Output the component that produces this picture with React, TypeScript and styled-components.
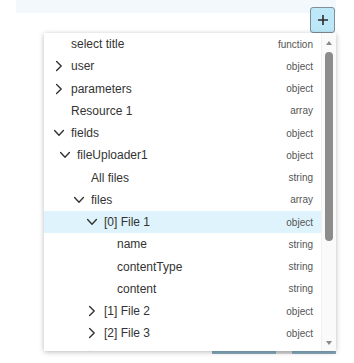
import React from "react";
import styled, {createGlobalStyle} from "styled-components";

type Node = {
    label: string
    type: string
    level: number
    expander?: "open" | "closed"
    selected?: boolean
}

const rows: Node[] = [
    {label: "select title", type: "function", level: 0},
    {label: "user", type: "object", level: 0, expander: "closed"},
    {label: "parameters", type: "object", level: 0, expander: "closed"},
    {label: "Resource 1", type: "array", level: 0},
    {label: "fields", type: "object", level: 0, expander: "open"},
    {label: "fileUploader1", type: "object", level: 1, expander: "open"},
    {label: "All files", type: "string", level: 2},
    {label: "files", type: "array", level: 2, expander: "open"},
    {label: "[0] File 1", type: "object", level: 3, expander: "open", selected: true},
    {label: "name", type: "string", level: 4},
    {label: "contentType", type: "string", level: 4},
    {label: "content", type: "string", level: 4},
    {label: "[1] File 2", type: "object", level: 3, expander: "closed"},
    {label: "[2] File 3", type: "object", level: 3, expander: "closed"},
    // only the top of the next chevron peeks out under the scroll edge
    {label: "", type: "", level: 3, expander: "closed"},
]

// left offset of the chevron slot for each depth
const indents = [9, 15, 29, 42, 55]

const GlobalStyle = createGlobalStyle`
  html, body {
    margin: 0;
    padding: 0;
    background: #ffffff;
  }

  body {
    font-family: "Liberation Sans", Arial, sans-serif;
    width: 354px;
    height: 363px;
    overflow: hidden;
  }
`

const Chevron: React.FC<{ open: boolean }> = ({open}) => (
    <svg width="12" height="12" viewBox="0 0 12 12"
         style={{transform: open ? "rotate(90deg)" : undefined}}>
        <path d="M3.6 1.6 L8.2 6 L3.6 10.4" fill="none" stroke="#333" strokeWidth="1.4"
              strokeLinecap="round" strokeLinejoin="round"/>
    </svg>
)

export default function App() {
    return (
        <>
            <GlobalStyle/>
            <Page>
                <TopStrip/>
                <ButtonRow>
                    <AddButton>
                        <svg width="12" height="12" viewBox="0 0 12 12">
                            <path d="M6 1 V11 M1 6 H11" stroke="#2b2b2b" strokeWidth="1.6"/>
                        </svg>
                    </AddButton>
                </ButtonRow>
                <Footer>
                    <FooterSeg $color="#86abbc" $width={64}/>
                    <FooterSeg $color="#d6d6d6" $width={16}/>
                    <FooterSeg $color="#86abbc" $width={44}/>
                </Footer>

                <Dropdown>
                    <List>
                        {rows.map((r, i) => (
                            <Row key={i} $selected={!!r.selected}>
                                <Expander style={{marginLeft: indents[r.level]}}>
                                    {r.expander && <Chevron open={r.expander === "open"}/>}
                                </Expander>
                                <Label>{r.label}</Label>
                                <TypeLabel>{r.type}</TypeLabel>
                            </Row>
                        ))}
                    </List>
                    <ScrollBar>
                        <ArrowUp/>
                        <Track>
                            <Thumb/>
                        </Track>
                        <ArrowDown/>
                    </ScrollBar>
                </Dropdown>
            </Page>
        </>
    )
}

const Page = styled.div`
  position: relative;
  width: 354px;
  height: 363px;
  display: flex;
  flex-direction: column;
`
const TopStrip = styled.div`
  margin-left: 16px;
  width: 320px;
  height: 13px;
  background: #f3f8fd;
`
const ButtonRow = styled.div`
  display: flex;
  justify-content: flex-end;
  padding-right: 19px;
  margin-top: -6px;
`
const AddButton = styled.button`
  width: 25px;
  height: 26px;
  padding: 0;
  display: flex;
  align-items: center;
  justify-content: center;
  background: #bce8f7;
  border: 1px solid #7f8e98;
  border-radius: 3px;
`
const Footer = styled.div`
  margin-top: auto;
  margin-bottom: 9px;
  align-self: flex-end;
  margin-right: 18px;
  display: flex;
  height: 3px;
`
const FooterSeg = styled.div<{ $color: string, $width: number }>`
  width: ${p => p.$width}px;
  background: ${p => p.$color};
`
const Dropdown = styled.div`
  position: absolute;
  left: 44px;
  top: 33px;
  width: 292px;
  height: 318px;
  display: flex;
  background: #ffffff;
  box-shadow: 0 1px 5px rgba(0, 0, 0, 0.28);
  overflow: hidden;
`
const List = styled.div`
  flex: 1;
  display: flex;
  flex-direction: column;
`
const Row = styled.div<{ $selected: boolean }>`
  flex: none;
  height: 22.25px;
  display: flex;
  align-items: center;
  padding-right: 8px;
  background: ${p => p.$selected ? "#def3fb" : "transparent"};
`
const Expander = styled.span`
  width: 12px;
  height: 12px;
  margin-right: 6px;
  flex: none;
  display: flex;
`
const Label = styled.span`
  flex: 1;
  font-size: 12px;
  color: #333333;
  white-space: nowrap;
`
const TypeLabel = styled.span`
  font-size: 10px;
  color: #555555;
`
const ScrollBar = styled.div`
  width: 14px;
  flex: none;
  display: flex;
  flex-direction: column;
  align-items: center;
  background: #fafafa;
  border-left: 1px solid #f0f0f0;
`
const ArrowUp = styled.div`
  margin-top: 8px;
  width: 0;
  height: 0;
  border-left: 3.5px solid transparent;
  border-right: 3.5px solid transparent;
  border-bottom: 4px solid #8a8a8a;
`
const ArrowDown = styled.div`
  margin-bottom: 6px;
  width: 0;
  height: 0;
  border-left: 3.5px solid transparent;
  border-right: 3.5px solid transparent;
  border-top: 4px solid #8a8a8a;
`
const Track = styled.div`
  flex: 1;
  width: 100%;
  display: flex;
  justify-content: center;
  padding-top: 7px;
`
const Thumb = styled.div`
  width: 8px;
  height: 189px;
  border-radius: 4px;
  background: #8c8c8c;
`
